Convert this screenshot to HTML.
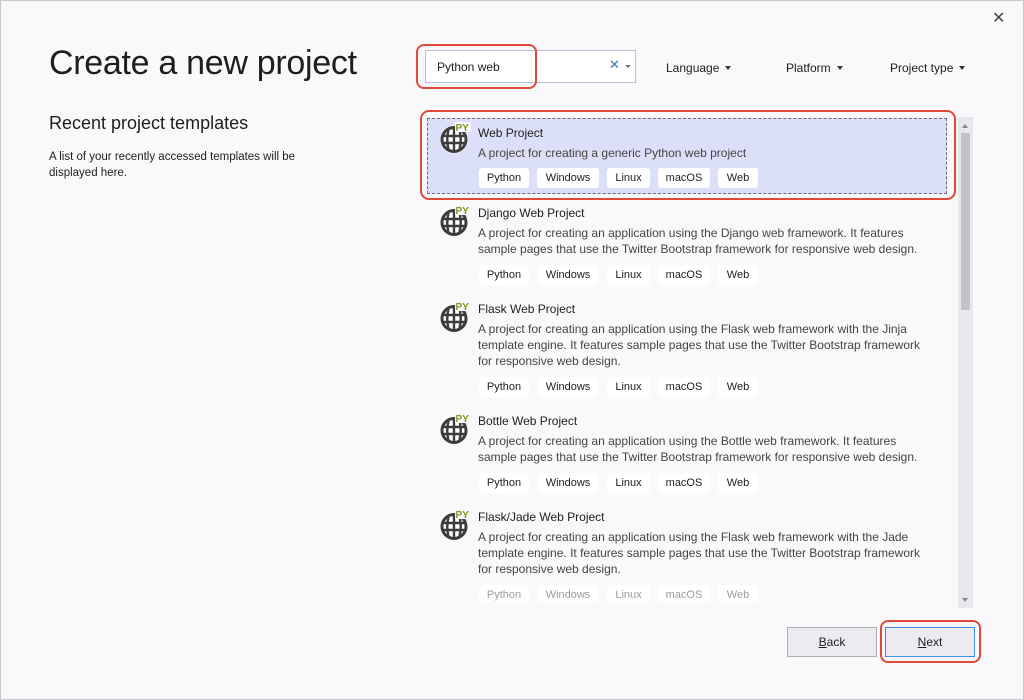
<!DOCTYPE html>
<html><head><meta charset="utf-8"><style>
*{margin:0;padding:0;box-sizing:border-box}
body{width:1024px;height:700px;background:#f9f9fb;font-family:"Liberation Sans",sans-serif;color:#1e1e1e;position:relative;overflow:hidden}
.win{position:absolute;left:0;top:0;width:1024px;height:700px;border:1px solid #c8c8cc}
.a{position:absolute}
h1{position:absolute;left:49px;top:44px;font-size:34px;font-weight:normal;color:#1e1e1e;letter-spacing:-0.3px}
.red{position:absolute;border:2px solid #e04a3a;border-radius:8px}
.tag{position:absolute;height:20px;background:#fff;border-radius:3px;font-size:11px;line-height:20px;text-align:center;color:#1e1e1e}
.t{position:absolute;left:478px;font-size:12px}
.d{position:absolute;left:478px;font-size:12px;line-height:16px;color:#444;width:450px}
.btn{position:absolute;top:627px;width:90px;height:30px;background:#ececf0;border:1px solid #b0b0b0;font-size:12px;text-align:center;line-height:28px}
.dd{position:absolute;top:61px;font-size:12px}
.dd:after{content:"";position:absolute;right:-12px;top:5px;border:3px solid transparent;border-top:4px solid #333}
</style></head><body>
<div class="win"></div>
<div class="a" style="left:992px;top:8px;font-size:16px;color:#444">✕</div>
<h1>Create a new project</h1>
<div class="a" style="left:49px;top:113px;font-size:18px">Recent project templates</div>
<div class="a" style="left:49px;top:149px;font-size:11.5px;line-height:16px;width:280px">A list of your recently accessed templates will be displayed here.</div>

<div class="a" style="left:425px;top:50px;width:211px;height:33px;background:#fff;border:1px solid #b8bcd4"></div>
<div class="a" style="left:437px;top:60px;font-size:12px">Python web</div>
<div class="a" style="left:609px;top:57px;font-size:13px;color:#3a6fc4">✕</div>
<div class="a" style="left:625px;top:65px;border:3px solid transparent;border-top:3px solid #777"></div>
<div class="red" style="left:416px;top:44px;width:121px;height:45px"></div>
<div class="dd" style="left:666px">Language</div>
<div class="dd" style="left:786px">Platform</div>
<div class="dd" style="left:890px">Project type</div>

<div class="a" style="left:427px;top:118px;width:520px;height:76px;background:#dcdff8;border:1px dashed #6a6a80"></div>
<div class="red" style="left:420px;top:110px;width:536px;height:90px;border-radius:9px"></div>

<div class="a" style="left:958px;top:117px;width:15px;height:491px;background:#e8e8ec"></div>
<div class="a" style="left:961px;top:133px;width:9px;height:177px;background:#c2c3c9"></div>
<div class="a" style="left:962px;top:121px;border:3.5px solid transparent;border-bottom:4px solid #888"></div>
<div class="a" style="left:962px;top:598px;border:3.5px solid transparent;border-top:4px solid #888"></div>

<svg width="0" height="0" style="position:absolute"><defs><g id="g">
<circle cx="15" cy="17.5" r="14" fill="#fff" opacity="0.9"/>
<circle cx="15" cy="17.5" r="12" fill="#fff" stroke="#3c3c3c" stroke-width="3"/>
<path d="M3.5 14H26.5M3.5 21H26.5M15 6V29M9.5 8Q7 17.5 9.5 27M20.5 8Q23 17.5 20.5 27" stroke="#3c3c3c" stroke-width="2.4" fill="none"/>
<rect x="16" y="0" width="16" height="10" fill="#f9f9fb"/>
<text x="16.5" y="9" font-family="Liberation Sans" font-weight="bold" font-size="10" fill="#7b9a1c">PY</text>
</g></defs></svg>

<svg class="a" style="left:439px;top:122px" width="32" height="32"><use href="#g"/></svg>
<svg class="a" style="left:439px;top:205px" width="32" height="32"><use href="#g"/></svg>
<svg class="a" style="left:439px;top:301px" width="32" height="32"><use href="#g"/></svg>
<svg class="a" style="left:439px;top:413px" width="32" height="32"><use href="#g"/></svg>
<svg class="a" style="left:439px;top:509px" width="32" height="32"><use href="#g"/></svg>

<div class="t" style="top:126px">Web Project</div>
<div class="d" style="top:145px">A project for creating a generic Python web project</div>
<div class="t" style="top:206px">Django Web Project</div>
<div class="d" style="top:225px">A project for creating an application using the Django web framework. It features sample pages that use the Twitter Bootstrap framework for responsive web design.</div>
<div class="t" style="top:302px">Flask Web Project</div>
<div class="d" style="top:321px">A project for creating an application using the Flask web framework with the Jinja template engine. It features sample pages that use the Twitter Bootstrap framework for responsive web design.</div>
<div class="t" style="top:414px">Bottle Web Project</div>
<div class="d" style="top:433px">A project for creating an application using the Bottle web framework. It features sample pages that use the Twitter Bootstrap framework for responsive web design.</div>
<div class="t" style="top:510px">Flask/Jade Web Project</div>
<div class="d" style="top:529px">A project for creating an application using the Flask web framework with the Jade template engine. It features sample pages that use the Twitter Bootstrap framework for responsive web design.</div>

<div id="tags"></div>
<script>
var ys=[168,265,377,473,585],xs=[[479,50,"Python"],[537,62,"Windows"],[607,43,"Linux"],[658,52,"macOS"],[718,40,"Web"]],h="";
ys.forEach(function(y,i){xs.forEach(function(x){h+='<div class="tag" style="left:'+x[0]+'px;top:'+y+'px;width:'+x[1]+'px;'+(i==4?'color:#999;height:18px;':'')+'">'+x[2]+'</div>';});});
document.getElementById("tags").innerHTML=h;
</script>
<div class="a" style="left:420px;top:596px;width:537px;height:12px;background:linear-gradient(rgba(249,249,251,0),#f9f9fb)"></div>

<div class="btn" style="left:787px"><u>B</u>ack</div>
<div class="btn" style="left:885px;border-color:#3c8ee8"><u>N</u>ext</div>
<div class="red" style="left:880px;top:620px;width:101px;height:43px"></div>
</body></html>
